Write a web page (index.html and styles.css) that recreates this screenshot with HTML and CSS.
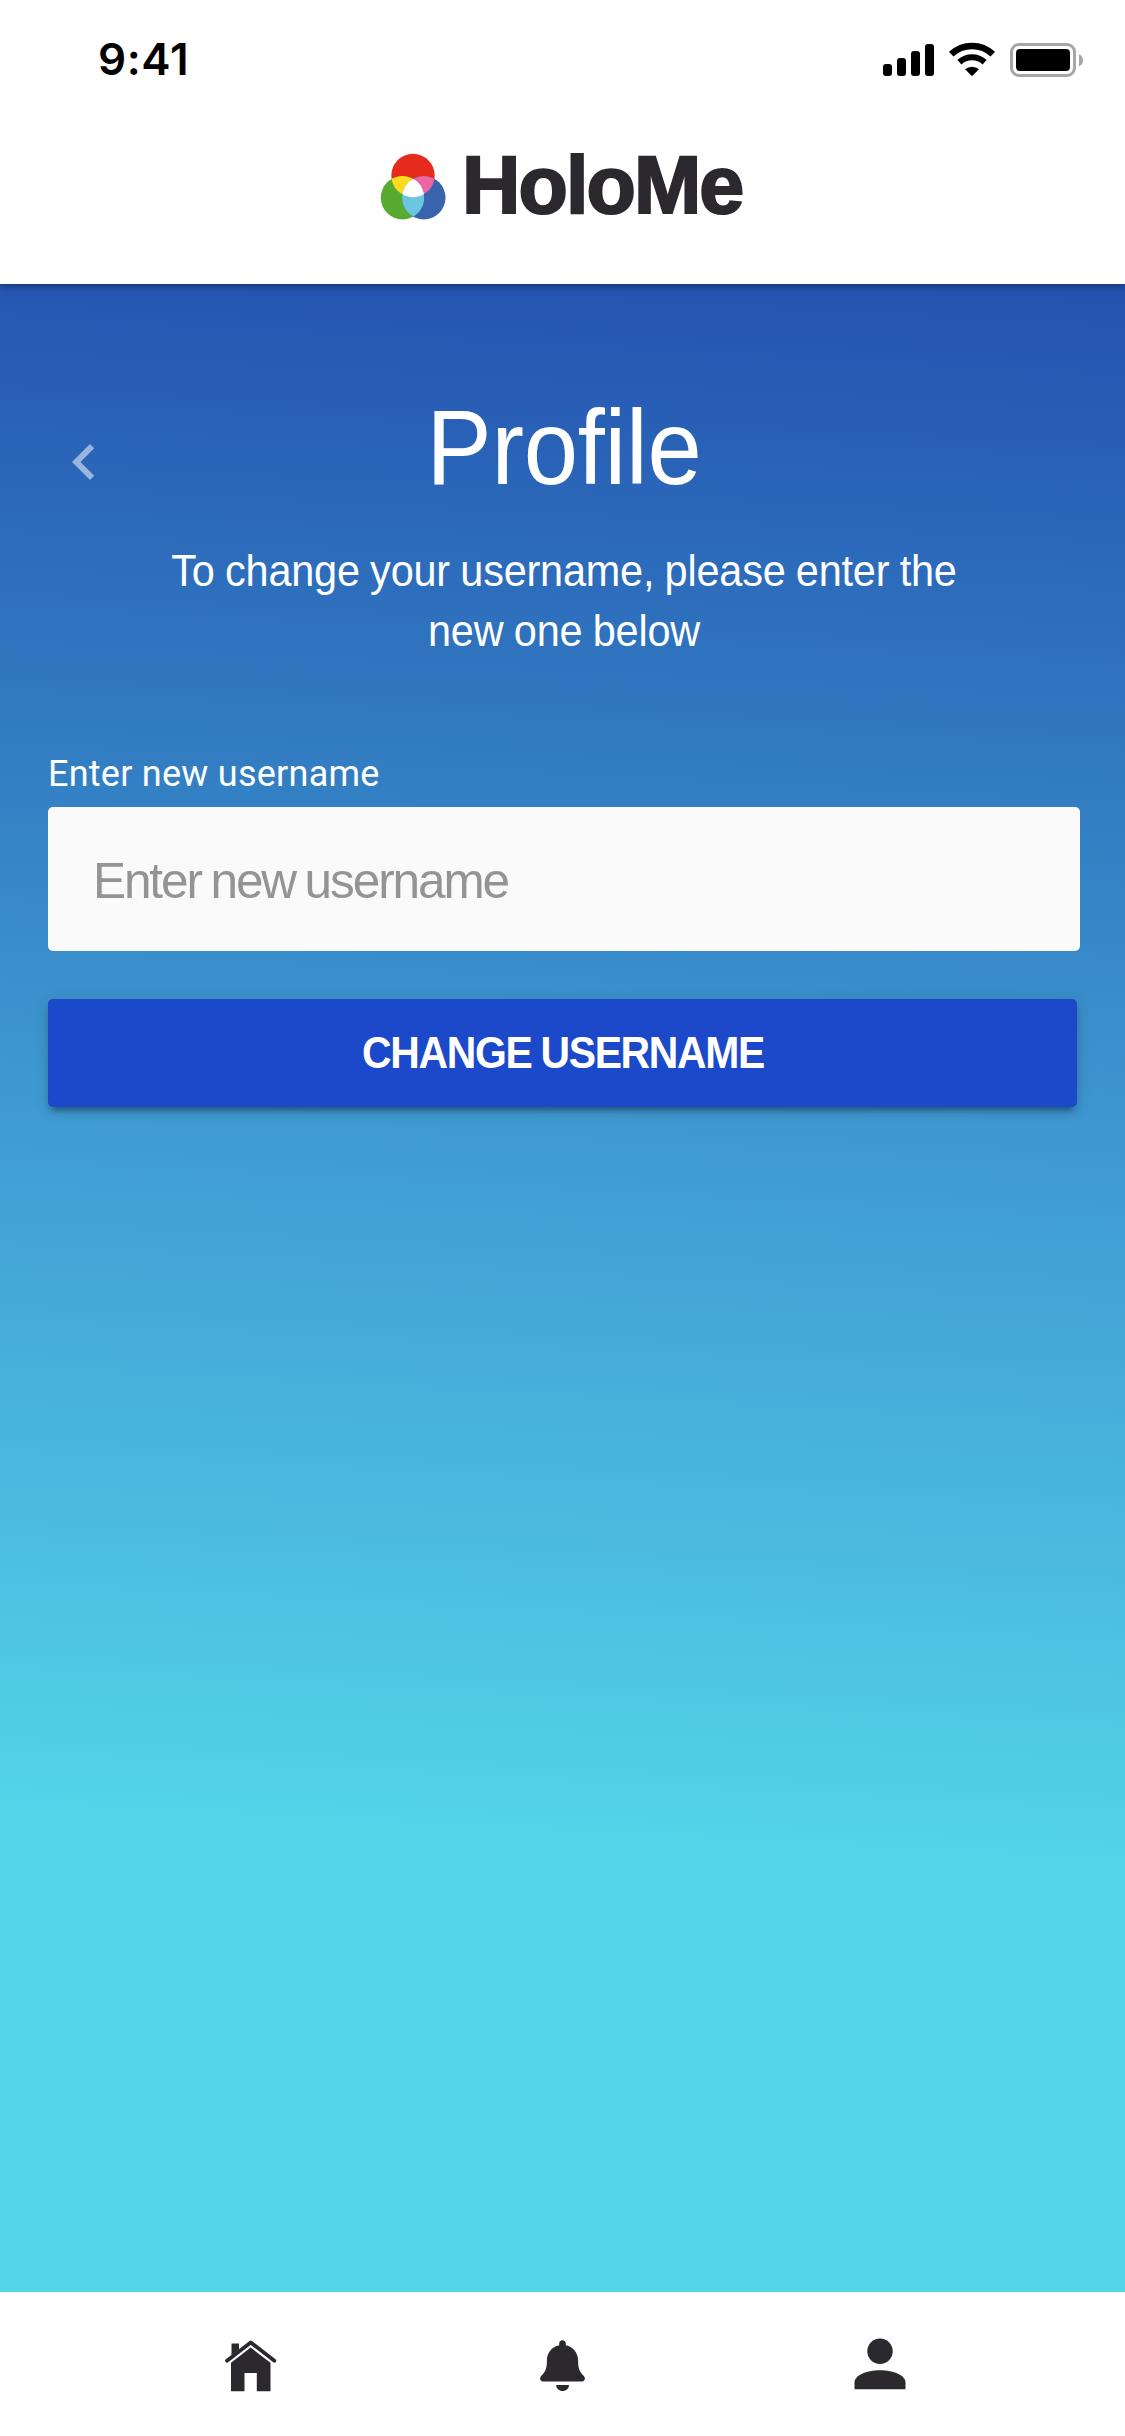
FILE: index.html
```html
<!DOCTYPE html>
<html lang="en">
<head>
<meta charset="utf-8">
<title>HoloMe – Profile</title>
<link rel="stylesheet" href="styles.css">
</head>
<body>
<div class="app">
  <header class="header">
    <div class="status">
      <span class="time">9:41</span>
      <svg class="status-icons" width="201" height="36" viewBox="0 0 201 36" aria-hidden="true">
        <rect x="0" y="22" width="9" height="12" rx="3"/>
        <rect x="14" y="16" width="9" height="18" rx="3"/>
        <rect x="28" y="9" width="9" height="25" rx="3"/>
        <rect x="42" y="2" width="9" height="32" rx="3"/>
        <g fill="none" stroke="#000">
          <path d="M68.200 12.200a30.300 30.300 0 0 1 41.600 0" stroke-width="6.400"/>
          <path d="M76.400 20.200a18.600 18.600 0 0 1 25.200 0" stroke-width="6"/>
        </g>
        <path d="M82 27.300a10.500 10.500 0 0 1 14 0l-6.300 6.300a1 1 0 0 1-1.400 0z"/>
        <rect x="128.500" y="2.500" width="63" height="31" rx="7.500" fill="none" stroke="#a6a6a6" stroke-width="3"/>
        <rect x="133" y="7" width="54" height="22" rx="4"/>
        <path d="M196 12.200a6.500 6.500 0 0 1 0 12z" fill="#a6a6a6"/>
      </svg>
    </div>
    <div class="brand">
      <svg class="brand-mark" width="66" height="68" viewBox="0 0 66 68" aria-hidden="true">
        <defs>
          <clipPath id="red"><circle cx="33" cy="22.500" r="21.700"/></clipPath>
          <clipPath id="green"><circle cx="22.500" cy="44.700" r="21.700"/></clipPath>
        </defs>
        <circle cx="33" cy="22.500" r="21.700" fill="#e52b1c"/>
        <circle cx="22.500" cy="44.700" r="21.700" fill="#57ab30"/>
        <circle cx="43.800" cy="44.700" r="21.700" fill="#3963ac"/>
        <circle cx="22.500" cy="44.700" r="21.700" fill="#fedb1c" clip-path="url(#red)"/>
        <circle cx="43.800" cy="44.700" r="21.700" fill="#ee649f" clip-path="url(#red)"/>
        <circle cx="43.800" cy="44.700" r="21.700" fill="#6cc6e0" clip-path="url(#green)"/>
        <g clip-path="url(#red)"><circle cx="43.800" cy="44.700" r="21.700" fill="#fff" clip-path="url(#green)"/></g>
      </svg>
      <span class="brand-name">HoloMe</span>
    </div>
  </header>

  <main class="content">
    <div class="title-row">
      <svg class="back" width="72" height="72" viewBox="0 0 24 24" role="img" aria-label="Back"><path d="M15.410 7.410 14 6l-6 6 6 6 1.410-1.410L10.830 12z"/></svg>
      <h1 class="title">Profile</h1>
    </div>
    <p class="intro">To change your username, please enter the<br>new one below</p>
    <form class="form">
      <label class="label" for="username">Enter new username</label>
      <input class="field" id="username" type="text" placeholder="Enter new username">
      <button class="submit" type="button"><span class="submit-text">CHANGE USERNAME</span></button>
    </form>
  </main>

  <nav class="tabs">
    <svg class="tab" width="52" height="52" viewBox="0 0 52 52" role="img" aria-label="Home">
      <path d="M6.500 3.500h7.500v6L6.500 15.500z"/>
      <path d="M2 20.700 25.700 2.400 49.400 20.700" fill="none" stroke="#2b292d" stroke-width="3.800" stroke-linecap="round" stroke-linejoin="round"/>
      <path d="M25.700 7.600 45.500 22.800V51.200H31.800V33H19.500V51.200H6V22.800z"/>
    </svg>
    <svg class="tab" width="52" height="52" viewBox="3.500 0 52 52" role="img" aria-label="Notifications">
      <path d="M26 0.200c2 0 3.300 1.500 3.300 3.300v1.700c7.600 1.500 12.300 7.800 12.300 15.300 0 7.500 1.200 11 5.500 15.200 2.600 2.500 1.100 5.800-2 5.800H6.900c-3.100 0-4.600-3.300-2-5.800 4.300-4.200 5.500-7.700 5.500-15.200 0-7.500 4.700-13.800 12.300-15.300V3.500c0-1.800 1.300-3.300 3.300-3.300z"/>
      <path d="M19.700 45h12.800c0 3.600-2.900 6-6.400 6s-6.400-2.400-6.400-6z"/>
    </svg>
    <svg class="tab" width="52" height="52" viewBox="0 0 52 52" role="img" aria-label="Profile">
      <circle cx="26" cy="11.300" r="12.700"/>
      <path d="M.500 49.300V42.500C.500 35.500 12 30.200 26 30.200s25.500 5.300 25.500 12.300v6.800z"/>
    </svg>
  </nav>
</div>
</body>
</html>
```
FILE: styles.css
```css
* {
  box-sizing: border-box;
}

body {
  margin: 0;
}

.app {
  display: flex;
  flex-direction: column;
  width: 1125px;
  height: 2436px;
  font-family: "Liberation Sans", Arial, sans-serif;
  color: #fff;
}

.header {
  z-index: 1;
  height: 284px;
  padding-top: 42px;
  background: #fff;
  box-shadow: 0 2px 8px rgba(0, 0, 0, 0.4);
}

.status {
  display: flex;
  justify-content: space-between;
  align-items: center;
  height: 36px;
  padding: 0 41px 0 98px;
}

.status-icons {
  overflow: visible;
}

.time {
  font: 600 44px/36px Inter, sans-serif;
  margin-top: -2px;
  letter-spacing: 0.6px;
  color: #000;
}

.brand {
  display: flex;
  align-items: center;
  gap: 16px;
  height: 68px;
  margin: 75px 0 0 380px;
}

.brand-mark,
.back {
  flex: none;
}

.brand-name {
  margin-top: -5px;
  font-size: 82px;
  font-weight: 700;
  line-height: 68px;
  letter-spacing: -1.9px;
  color: #2b292d;
  -webkit-text-stroke: 2.2px #2b292d;
  transform: scaleX(0.985);
  transform-origin: left;
}

.content {
  flex: 1;
  padding: 96px 45px 0 48px;
  background: linear-gradient(183deg, #2452b0 0%, #327cc2 24.5%, #43a4d7 48.5%, #53d5e9 77%);
}

.title-row {
  display: grid;
  grid-template-columns: 72px 1fr 72px;
  align-items: center;
  height: 136px;
}

.back {
  margin-top: 28px;
  fill: rgba(255, 255, 255, 0.52);
}

.title {
  margin: 0;
  font-size: 105px;
  font-weight: 400;
  line-height: 134px;
  letter-spacing: -0.3px;
  text-align: center;
  transform: scaleX(0.93);
}

.intro {
  margin: 25px 0 0;
  font-size: 43.6px;
  line-height: 60px;
  letter-spacing: -0.2px;
  word-spacing: -1px;
  text-align: center;
  transform: scaleX(0.95);
}

.form {
  display: flex;
  flex-direction: column;
}

.label {
  margin: 93px 0 13px;
  font: 400 36px/40px Roboto, sans-serif;
  letter-spacing: 0.25px;
}

.field {
  width: 1032px;
  height: 144px;
  padding: 2px 45px 0;
  border: 0;
  border-radius: 5px;
  background: #fafafa;
  font: 400 49.5px "Liberation Sans", Arial, sans-serif;
  letter-spacing: -2.1px;
  word-spacing: -2px;
}

.field::placeholder {
  color: #949494;
  opacity: 1;
}

.submit {
  width: 1029px;
  height: 108px;
  margin-top: 48px;
  padding: 0 0 0 1px;
  border: 0;
  border-radius: 5px;
  background: #1c48ca;
  box-shadow: 0 9px 3px -6px rgba(0, 0, 0, 0.2), 0 6px 6px rgba(0, 0, 0, 0.14), 0 3px 15px rgba(0, 0, 0, 0.12);
  font: 700 43.5px "Liberation Sans", Arial, sans-serif;
  letter-spacing: -1.4px;
  word-spacing: -1px;
  color: #fff;
}

.submit-text {
  display: block;
  transform: scaleX(0.94);
}

.tabs {
  display: flex;
  justify-content: space-between;
  height: 144px;
  padding: 48px 219px 0 225px;
  background: #fff;
}

.tab {
  overflow: visible;
  fill: #2b292d;
}
```
